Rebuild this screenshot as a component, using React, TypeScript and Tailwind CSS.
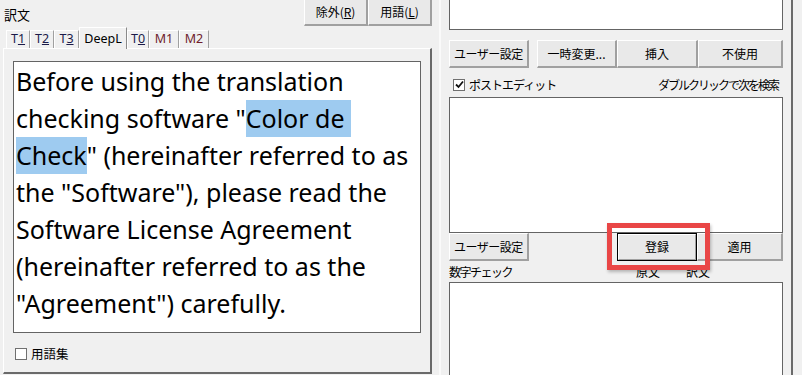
import React from 'react'

const jp = { fontFamily: '"Noto Sans CJK JP", "Noto Sans", sans-serif' }
const latin = { fontFamily: '"Noto Sans", "Noto Sans CJK JP", sans-serif' }

interface BtnProps {
  label: React.ReactNode
  w: string
  focused?: boolean
}

function Btn({ label, w, focused }: BtnProps) {
  if (focused) {
    return (
      <div className={`${w} h-[28px] shrink-0 border border-black bg-[#e9e9e9] p-0`}>
        <div className="flex h-full w-full items-center justify-center border-t border-l border-t-white border-l-white border-r border-b border-r-[#a0a0a0] border-b-[#a0a0a0] text-[12px] text-black">
          {label}
        </div>
      </div>
    )
  }
  return (
    <div
      className={`${w} flex h-[28px] shrink-0 items-center justify-center border-t border-l border-t-white border-l-white border-r-2 border-b-2 border-r-[#a0a0a0] border-b-[#a0a0a0] bg-[#e9e9e9] text-[12px] text-black`}
    >
      {label}
    </div>
  )
}

interface TabProps {
  label: React.ReactNode
  w: string
  active?: boolean
  color?: string
}

function Tab({ label, w, active, color }: TabProps) {
  if (active) {
    return (
      <div
        className={`${w} relative z-10 -mb-[1px] flex h-[22px] items-start justify-center border-t border-l border-t-white border-l-white border-r border-r-[#8a8a8a] bg-[#f0f0f0] pt-[2px] text-[12.5px] text-black`}
      >
        {label}
      </div>
    )
  }
  return (
    <div
      className={`${w} mt-[4px] flex h-[18px] items-center justify-center border-t border-l border-t-white border-l-white border-r border-r-[#a0a0a0] bg-[#f0f0f0] text-[12.5px] ${color}`}
    >
      {label}
    </div>
  )
}

function Check({ checked }: { checked?: boolean }) {
  return (
    <div className="flex h-[12px] w-[12px] items-center justify-center border border-[#707070] bg-white">
      {checked && (
        <svg width="9" height="9" viewBox="0 0 9 9">
          <path d="M1 4.5 L3.5 7 L8 1.5" stroke="#111" strokeWidth="1.8" fill="none" />
        </svg>
      )}
    </div>
  )
}

const lines: React.ReactNode[] = [
  'Before using the translation',
  <>
    checking software "<span className="inline-block bg-[#9ecbf0]">Color de&nbsp;</span>
  </>,
  <>
    <span className="inline-block bg-[#9ecbf0]">Check</span>" (hereinafter referred to as
  </>,
  'the "Software"), please read the',
  'Software License Agreement',
  '(hereinafter referred to as the',
  '"Agreement") carefully.',
]

export default function App() {
  return (
    <div className="flex h-[375px] w-[802px] overflow-hidden bg-[#f0f0f0]" style={jp}>
      {/* left column */}
      <div className="flex w-[432px] shrink-0 flex-col">
        <div className="flex h-[26px] shrink-0 items-start justify-between">
          <p className="pt-[5px] pl-[4px] text-[13px] text-black">訳文</p>
          <div className="-mt-[2px] flex">
            <Btn w="w-[64px]" label={<span>除外(<u>R</u>)</span>} />
            <Btn w="w-[64px]" label={<span>用語(<u>L</u>)</span>} />
          </div>
        </div>
        <div className="flex shrink-0 items-end pl-[6px]" style={latin}>
          <Tab w="w-[24px]" color="text-[#1b1b4a]" label={<span>T<u>1</u></span>} />
          <Tab w="w-[24px]" color="text-[#1b1b4a]" label={<span>T<u>2</u></span>} />
          <Tab w="w-[25px]" color="text-[#1b1b4a]" label={<span>T<u>3</u></span>} />
          <Tab w="w-[48px]" active label="DeepL" />
          <Tab w="w-[22px]" color="text-[#1b1b4a]" label={<span>T<u>0</u></span>} />
          <Tab w="w-[30px]" color="text-[#6e1c2c]" label="M1" />
          <Tab w="w-[30px]" color="text-[#6e1c2c]" label="M2" />
        </div>
        <div className="ml-[3px] flex h-[326px] shrink-0 flex-col border-t border-l border-t-white border-l-white border-r-2 border-b-2 border-r-[#6a6a6a] border-b-[#6a6a6a] px-[9px] pt-[12px]">
          <div
            className="h-[272px] w-[408px] shrink-0 border border-[#646464] bg-white pt-[1px] pl-[2px] text-[25px] text-black"
            style={latin}
          >
            {lines.map((l, i) => (
              <div key={i} className="h-[37px] whitespace-nowrap leading-[37px]">
                {l}
              </div>
            ))}
          </div>
          <div className="mt-[12px] flex shrink-0 items-center gap-[4px] pl-[2px]">
            <Check />
            <span className="text-[12.5px] text-black">用語集</span>
          </div>
        </div>
      </div>

      {/* divider */}
      <div className="flex w-[17px] shrink-0 justify-center">
        <div className="ml-[-2px] w-[2px] bg-[#fafafa]" />
      </div>

      {/* right column */}
      <div className="flex w-[334px] shrink-0 flex-col">
        <div className="h-[30px] shrink-0 border-x border-b border-[#646464] bg-white" />
        <div className="mt-[10px] flex shrink-0">
          <Btn w="w-[80px]" label={<span className="tracking-[-0.5px]">ユーザー設定</span>} />
          <div className="w-[8px]" />
          <Btn w="w-[80px]" label="一時変更..." />
          <Btn w="w-[81px]" label="挿入" />
          <Btn w="w-[85px]" label="不使用" />
        </div>
        <div className="mt-[6px] flex h-[21px] shrink-0 items-center justify-between pl-[4px] pr-[5px]">
          <div className="flex items-center gap-[4px]">
            <Check checked />
            <span className="text-[12px] tracking-[-1px] text-black">ポストエディット</span>
          </div>
          <span className="text-[12px] tracking-[-2px] text-black">ダブルクリックで次を検索</span>
        </div>
        <div className="mt-[2px] h-[136px] shrink-0 border border-[#646464] bg-white" />
        <div className="relative flex shrink-0">
          <Btn w="w-[80px]" label={<span className="tracking-[-0.5px]">ユーザー設定</span>} />
          <div className="w-[88px]" />
          <Btn w="w-[80px]" focused label="登録" />
          <Btn w="w-[86px]" label="適用" />
          <div className="absolute top-[-10px] left-[158px] h-[47px] w-[103px] border-[5px] border-[#e94646] shadow-[1px_2px_3px_rgba(0,0,0,0.25)]" />
        </div>
        <div className="flex h-[21px] shrink-0 items-center text-[12px] text-black">
          <span className="tracking-[-1.5px]">数字チェック</span>
          <span className="ml-[124px]">原文</span>
          <span className="ml-[26px]">訳文</span>
        </div>
        <div className="h-[120px] shrink-0 border border-[#646464] bg-white" />
      </div>

      {/* right frame edge */}
      <div className="flex w-[19px] shrink-0">
        <div className="ml-[8px] w-[2px] bg-[#6a6a6a]" />
      </div>
    </div>
  )
}
